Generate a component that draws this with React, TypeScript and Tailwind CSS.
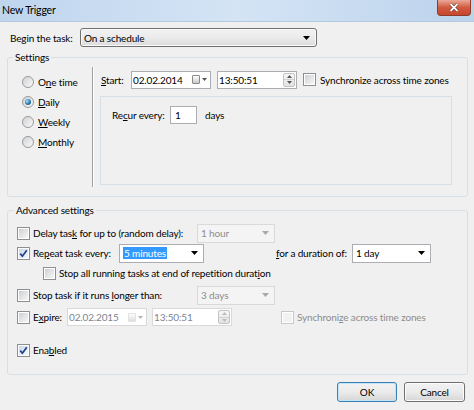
import React from 'react';

const ui = "font-['Lato',sans-serif]";

function Arrow({ off = false }: { off?: boolean }) {
  return (
    <svg width="7" height="4" viewBox="0 0 7 4" className="shrink-0">
      <path d="M0 0h7L3.5 4z" fill={off ? '#a9a9a9' : '#000'} />
    </svg>
  );
}

function Check({ on = false, off = false, className = '' }: { on?: boolean; off?: boolean; className?: string }) {
  return (
    <span
      className={`flex h-[13px] w-[13px] shrink-0 items-center justify-center border bg-white ${
        off ? 'border-[#c8c8c8]' : 'border-[#8e8f8f]'
      } ${className}`}
    >
      <span
        className={`flex h-[9px] w-[9px] items-center justify-center ${
          off ? 'bg-[#f2f2f2]' : on ? 'bg-gradient-to-br from-[#c9d7e8] to-[#f4f8fc]' : 'bg-gradient-to-br from-[#cdd0d4] to-[#f7f7f7]'
        }`}
      >
        {on && (
          <svg width="9" height="9" viewBox="0 0 9 9">
            <path d="M1.3 4.6l2.1 2.6L7.8 1.2" fill="none" stroke="#21408a" strokeWidth="1.7" />
          </svg>
        )}
      </span>
    </span>
  );
}

function Radio({ on = false }: { on?: boolean }) {
  return (
    <span className="flex h-[12px] w-[12px] shrink-0 items-center justify-center rounded-full border border-[#9a9a9a] bg-gradient-to-br from-[#cfd2d6] to-[#fafafa]">
      {on && (
        <span className="h-[6px] w-[6px] rounded-full bg-[radial-gradient(circle_at_35%_35%,#a6e1fa,#2a78ad_55%,#15436c)]" />
      )}
    </span>
  );
}

function Combo({ w, children, off = false }: { w: string; children: React.ReactNode; off?: boolean }) {
  return (
    <div
      className={`flex h-[19px] shrink-0 items-center border pl-[3px] pr-[5px] ${w} ${
        off ? 'border-[#d9d9d9] bg-[#f4f4f4] text-[#8d8d8d]' : 'border-[#abadb3] bg-white'
      }`}
    >
      <span className="flex-1 truncate">{children}</span>
      <Arrow off={off} />
    </div>
  );
}

function DateBox({ value, off = false, className = '' }: { value: string; off?: boolean; className?: string }) {
  return (
    <div
      className={`flex h-[18px] w-[80px] shrink-0 items-center border bg-white pl-[1px] pr-[3px] ${
        off ? 'border-[#d9d9d9] text-[#7c8591]' : 'border-[#abadb3]'
      } ${className}`}
    >
      <span className="flex-1">{value}</span>
      <span
        className={`h-[9px] w-[8px] rounded-[1px] border bg-gradient-to-b from-white to-[#c9c9c9] ${
          off ? 'border-[#cfcfcf] opacity-60' : 'border-[#8a8a8a]'
        }`}
      />
      <svg width="5" height="3" viewBox="0 0 5 3" className="ml-[2px]">
        <path d="M0 0h5L2.5 3z" fill={off ? '#b5b5b5' : '#555'} />
      </svg>
    </div>
  );
}

function TimeBox({ value, off = false, className = '' }: { value: string; off?: boolean; className?: string }) {
  const c = off ? '#bcbcbc' : '#555';
  return (
    <div
      className={`flex h-[18px] w-[80px] shrink-0 items-stretch border bg-white pl-[1px] ${
        off ? 'border-[#d9d9d9] text-[#7c8591]' : 'border-[#abadb3]'
      } ${className}`}
    >
      <span className="flex flex-1 items-center">{value}</span>
      <span className="my-[1px] mr-[1px] flex w-[12px] flex-col rounded-[2px] border border-[#c3c3c3] bg-gradient-to-b from-[#f7f7f7] to-[#e3e3e3]">
        <span className="flex flex-1 items-center justify-center border-b border-[#d0d0d0]">
          <svg width="5" height="3" viewBox="0 0 5 3">
            <path d="M0 3h5L2.5 0z" fill={c} />
          </svg>
        </span>
        <span className="flex flex-1 items-center justify-center">
          <svg width="5" height="3" viewBox="0 0 5 3">
            <path d="M0 0h5L2.5 3z" fill={c} />
          </svg>
        </span>
      </span>
    </div>
  );
}

function Btn({ children, primary = false }: { children: React.ReactNode; primary?: boolean }) {
  return (
    <button
      className={`flex h-[20px] items-center justify-center rounded-[3px] border bg-gradient-to-b from-[#f2f2f2] via-[#ebebeb] to-[#d6d6d6] ${
        primary
          ? 'w-[60px] border-[#3c7fb1] shadow-[inset_0_0_0_1px_#bfe6fb]'
          : 'w-[61px] border-[#707070] shadow-[inset_0_0_0_1px_#fcfcfc]'
      }`}
    >
      {children}
    </button>
  );
}

export default function App() {
  return (
    <div className={`flex h-[410px] w-[474px] flex-col overflow-hidden whitespace-nowrap bg-[#f0f0f0] text-[10px] leading-[14px] tracking-[-0.15px] text-black ${ui}`}>
      {/* caption bar */}
      <div className="flex h-[22px] shrink-0 items-start justify-between border-b border-[#b4c8de] bg-gradient-to-r from-[#bfd5ee] via-[#d4e4f5] to-[#bcd3ec]">
        <span className="pl-[2px] pt-[3px] text-[10.5px] leading-[15px]">New Trigger</span>
        <button className="mr-[3px] flex h-[16px] w-[34px] items-center justify-center rounded-b-[4px] border border-t-0 border-[#8d3b2b] bg-gradient-to-b from-[#e9a897] via-[#d15a40] to-[#c7462b]">
          <svg width="10" height="9" viewBox="0 0 10 9">
            <path d="M1.5 1l7 7M8.5 1l-7 7" stroke="#5a2016" strokeWidth="3" />
            <path d="M1.5 1l7 7M8.5 1l-7 7" stroke="#fff" strokeWidth="1.8" />
          </svg>
        </button>
      </div>

      <div className="ml-[10px] mt-[6px] flex h-[19px] items-center">
        <span className="w-[70px]">Begin the task:</span>
        <div className="flex h-[19px] w-[237px] items-center rounded-[3px] border border-[#707070] bg-gradient-to-b from-[#f2f2f2] via-[#ebebeb] to-[#dcdcdc] pl-[3px] pr-[6px] shadow-[inset_0_0_0_1px_#fbfbfb]">
          <span className="flex-1">On a schedule</span>
          <Arrow />
        </div>
      </div>

      {/* Settings */}
      <fieldset className="ml-[7px] mt-[3px] h-[147px] w-[461px] shrink-0 rounded-[3px] border border-[#d5dfe5]">
        <legend className="ml-[5px] px-[2px] leading-[14px]">Settings</legend>
        <div className="flex h-[131px]">
          <div className="flex w-[84px] flex-col pl-[14px] pt-[8px]">
            <label className="flex h-[20px] items-center gap-[4px]">
              <Radio />
              <span>O<u>n</u>e time</span>
            </label>
            <label className="flex h-[20px] items-center gap-[4px]">
              <Radio on />
              <span><u>D</u>aily</span>
            </label>
            <label className="flex h-[20px] items-center gap-[4px]">
              <Radio />
              <span><u>W</u>eekly</span>
            </label>
            <label className="flex h-[20px] items-center gap-[4px]">
              <Radio />
              <span><u>M</u>onthly</span>
            </label>
          </div>
          <div className="mb-[8px] mt-[3px] w-[2px] border-l border-r border-l-[#a0a0a0] border-r-white" />
          <div className="flex flex-1 flex-col">
            <div className="mt-[7px] flex h-[17px] items-center pl-[7px]">
              <span className="w-[30px]"><u>S</u>tart:</span>
              <DateBox value="02.02.2014" />
              <TimeBox value="13:50:51" className="ml-[6px]" />
              <Check className="ml-[6px]" />
              <span className="ml-[4px]">Synchronize across time zones</span>
            </div>
            <div className="ml-[6px] mt-[8px] h-[89px] w-[352px] border border-[#d5dfe5] pl-[11px] pt-[9px]">
              <div className="flex h-[18px] items-center">
                <span className="w-[58px]">Re<u>c</u>ur every:</span>
                <div className="flex h-[18px] w-[27px] items-center border border-[#abadb3] bg-white pl-[4px]">1</div>
                <span className="ml-[8px]">days</span>
              </div>
            </div>
          </div>
        </div>
      </fieldset>

      {/* Advanced settings */}
      <fieldset className="ml-[7px] mt-[6px] h-[172px] w-[461px] shrink-0 rounded-[3px] border border-[#d5dfe5]">
        <legend className="ml-[6px] px-[2px] leading-[14px]">Advanced settings</legend>
        <div className="flex flex-col pl-[9px]">
          <div className="mt-[6px] flex h-[20px] items-center">
            <Check />
            <span className="ml-[3px] w-[164px]">Delay tas<u>k</u> for up to (random delay):</span>
            <Combo w="w-[78px]" off>1 hour</Combo>
          </div>
          <div className="flex h-[20px] items-center">
            <Check on />
            <span className="ml-[3px] w-[86px]">Re<u>p</u>eat task every:</span>
            <Combo w="w-[85px]">
              <span className="bg-[#3399ff] px-[1px] text-white">5 minutes</span>
            </Combo>
            <span className="ml-[72px] w-[76px]"><u>f</u>or a duration of:</span>
            <Combo w="w-[79px]">1 day</Combo>
          </div>
          <div className="flex h-[20px] items-center pl-[26px]">
            <Check />
            <span className="ml-[3px]">Stop all running tasks at end of repetition durat<u>i</u>on</span>
          </div>
          <div className="mt-[2px] flex h-[20px] items-center">
            <Check />
            <span className="ml-[3px] w-[164px]">Stop task if it runs <u>l</u>onger than:</span>
            <Combo w="w-[78px]" off>3 days</Combo>
          </div>
          <div className="mt-[2px] flex h-[20px] items-center">
            <Check />
            <span className="ml-[3px] w-[34px]">E<u>x</u>pire:</span>
            <DateBox value="02.02.2015" off />
            <TimeBox value="13:50:51" off className="ml-[5px]" />
            <Check off className="ml-[49px]" />
            <span className="ml-[3px] text-[#8d8d8d]">Synchroni<u>z</u>e across time zones</span>
          </div>
          <div className="mt-[13px] flex h-[20px] items-center">
            <Check on />
            <span className="ml-[3px]">Ena<u>b</u>led</span>
          </div>
        </div>
      </fieldset>

      <div className="mt-[7px] flex justify-end gap-[7px] pr-[9px]">
        <Btn primary>OK</Btn>
        <Btn>Cancel</Btn>
      </div>
    </div>
  );
}
